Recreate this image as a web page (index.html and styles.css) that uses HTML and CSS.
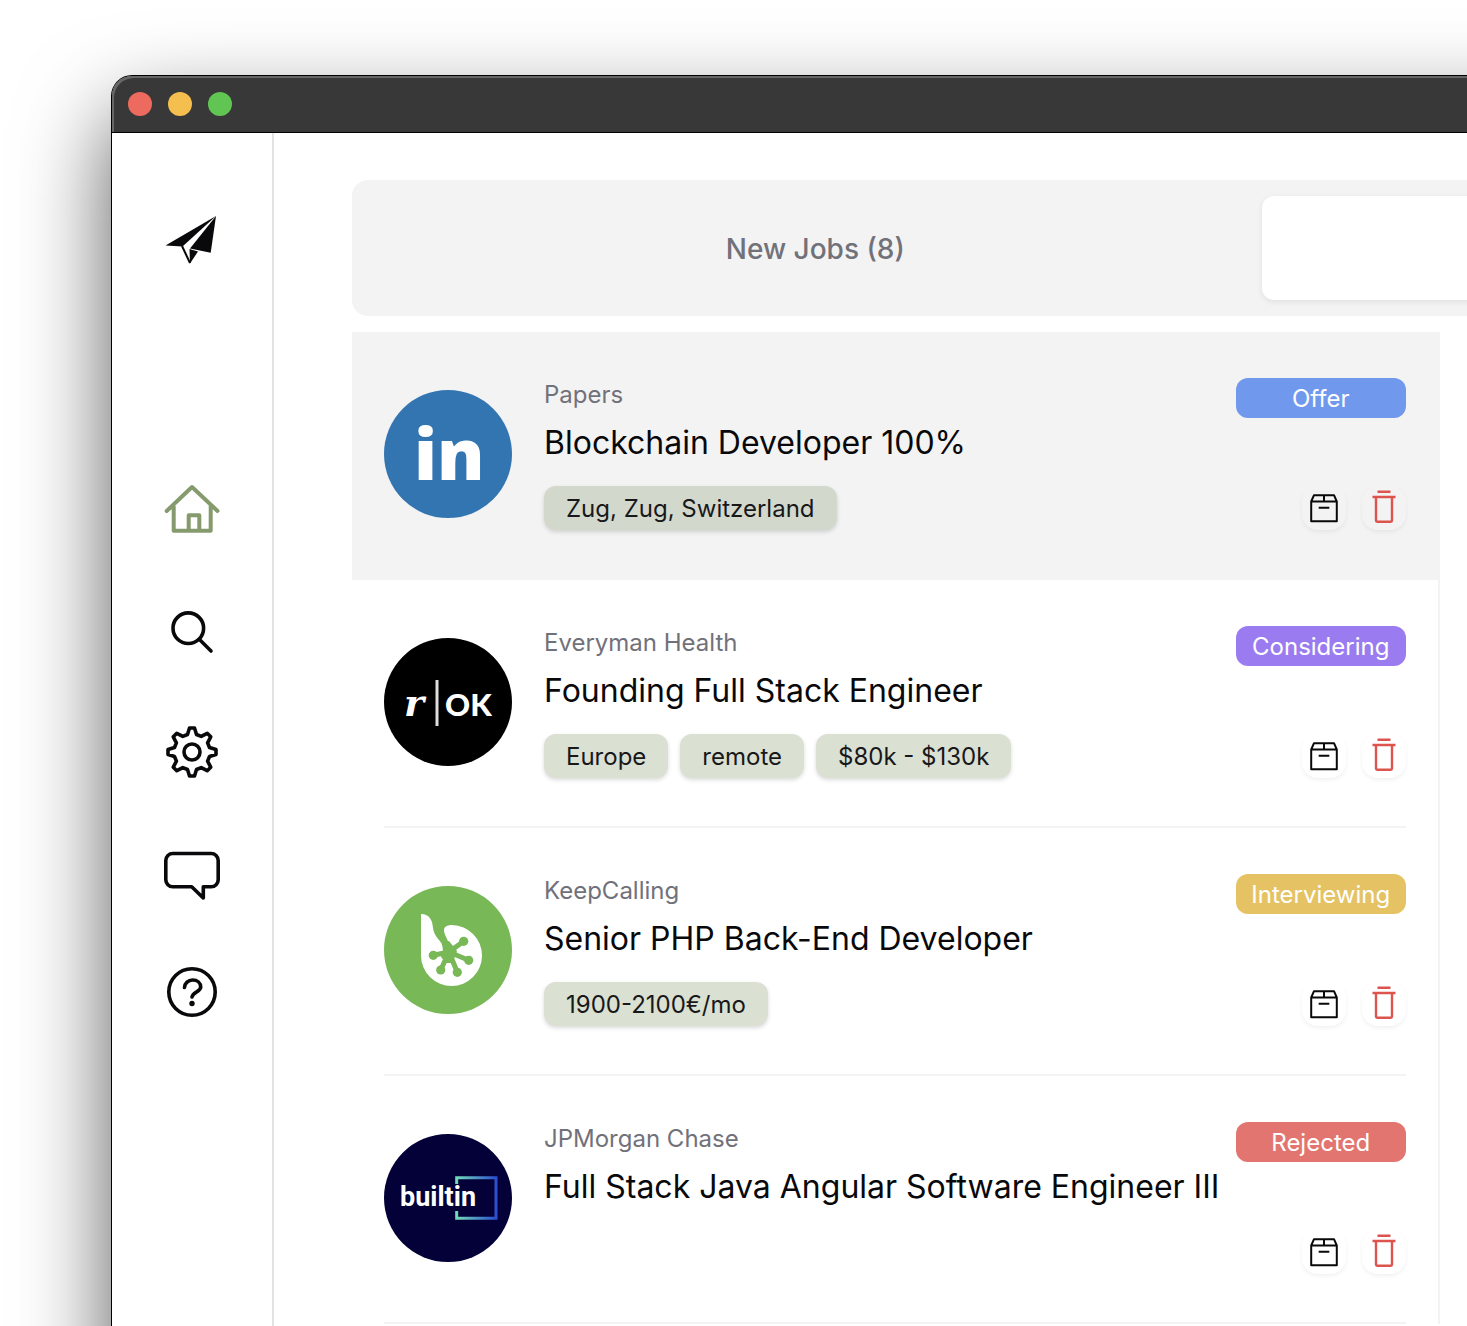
FILE: index.html
```html
<!DOCTYPE html>
<html lang="en">
<head>
<meta charset="utf-8">
<title>Jobs</title>
<link rel="stylesheet" href="styles.css">
</head>
<body>
<svg class="sprite" aria-hidden="true">
  <symbol id="archive" viewBox="0 0 44 44"><path d="M9.200 15.500L12 9.200H32L34.800 15.500V35.200H9.200ZM9.200 15.500H34.800M22 9.200V15.500M16.700 21.700H27.300"/></symbol>
  <symbol id="trash" viewBox="0 0 44 44"><path d="M15.500 5.700H28.500M10.500 11H33.500M14 11V34Q14 35.700 15.700 35.700H28.300Q30 35.700 30 34V11"/></symbol>
</svg>
<div class="window">
  <header class="titlebar">
    <span class="light light-close"></span>
    <span class="light light-minimize"></span>
    <span class="light light-zoom"></span>
  </header>
  <div class="app">
    <aside class="sidebar">
      <a class="brand" href="#" aria-label="Start">
        <svg viewBox="0 0 56 56"><path d="M1.500 33.500L52 4L18.500 34.500Z"/><path d="M52 4L46.700 40.700L26 36.500Z"/><path d="M25.500 37L34 39.500L26 51.500Z"/><path class="fold" d="M18 34L26 51"/></svg>
      </a>
      <nav class="nav">
        <a class="nav-link active" href="#" aria-label="Home"><svg viewBox="0 0 56 56"><path d="M2.700 27L28 3L53.500 27M9.700 22V46.700H46.700V22M24.700 46V31.300H35.300V46"/></svg></a>
        <a class="nav-link" href="#" aria-label="Search"><svg viewBox="0 0 56 56"><circle cx="24.300" cy="24.200" r="15.300"/><path d="M35.500 35.500L47 47"/></svg></a>
        <a class="nav-link" href="#" aria-label="Settings"><svg viewBox="0 0 56 56"><circle cx="28" cy="28" r="8"/><path transform="translate(28 28)" d="M-2.500 -24H2.500L4.500 -17.500L9.200 -15.600L15.200 -18.700L18.700 -15.200L15.600 -9.200L17.500 -4.500L24 -2.500V2.500L17.500 4.500L15.600 9.200L18.700 15.200L15.200 18.700L9.200 15.600L4.500 17.500L2.500 24H-2.500L-4.500 17.500L-9.200 15.600L-15.200 18.700L-18.700 15.200L-15.600 9.200L-17.500 4.500L-24 2.500V-2.500L-17.500 -4.500L-15.600 -9.200L-18.700 -15.200L-15.200 -18.700L-9.200 -15.600L-4.500 -17.500Z"/></svg></a>
        <a class="nav-link" href="#" aria-label="Feedback"><svg viewBox="0 0 56 56"><path d="M9 9.500H47A7 7 0 0 1 54.200 16.500V35.500A7 7 0 0 1 47 42.700H39.300V54L27.700 42.700H9A7 7 0 0 1 1.800 35.500V16.500A7 7 0 0 1 9 9.500Z"/></svg></a>
        <a class="nav-link" href="#" aria-label="Help"><svg viewBox="0 0 56 56"><circle cx="28" cy="28" r="23.200"/><path d="M20.500 23.500A8 8 0 0 1 28.500 16C33.500 16 36.700 19 36.700 23C36.700 28 29 27.500 28 33"/><circle class="dot" cx="28" cy="39.500" r="2.700"/></svg></a>
      </nav>
    </aside>
    <main class="main">
      <div class="tabs" role="tablist">
        <button class="tab" role="tab" type="button">New Jobs (8)</button>
        <button class="tab selected" role="tab" type="button" aria-label="Applied"></button>
      </div>
      <div class="board">
      <ul class="jobs">
        <li class="job selected">
          <div class="job-inner">
            <svg class="avatar" viewBox="0 0 128 128" role="img" aria-label="LinkedIn"><circle cx="64" cy="64" r="64" fill="#3375b1"/><text class="logo-in" x="30" y="90">in</text></svg>
            <div class="details">
              <p class="company">Papers</p>
              <h2 class="title">Blockchain Developer 100%</h2>
              <div class="chips"><span class="chip">Zug, Zug, Switzerland</span></div>
            </div>
            <div class="side">
              <span class="status offer">Offer</span>
              <div class="actions">
                <button class="action" type="button" aria-label="Archive"><svg><use href="#archive"/></svg></button>
                <button class="action danger" type="button" aria-label="Delete"><svg><use href="#trash"/></svg></button>
              </div>
            </div>
          </div>
        </li>
        <li class="job">
          <div class="job-inner">
            <svg class="avatar" viewBox="0 0 128 128" role="img" aria-label="RemoteOK"><circle cx="64" cy="64" r="64" fill="#000"/><text class="logo-r" x="20" y="78">r</text><path d="M53 42V88" stroke="#ddd" stroke-width="3"/><text class="logo-ok" x="61" y="78">OK</text></svg>
            <div class="details">
              <p class="company">Everyman Health</p>
              <h2 class="title">Founding Full Stack Engineer</h2>
              <div class="chips"><span class="chip">Europe</span><span class="chip">remote</span><span class="chip">$80k - $130k</span></div>
            </div>
            <div class="side">
              <span class="status considering">Considering</span>
              <div class="actions">
                <button class="action" type="button" aria-label="Archive"><svg><use href="#archive"/></svg></button>
                <button class="action danger" type="button" aria-label="Delete"><svg><use href="#trash"/></svg></button>
              </div>
            </div>
          </div>
        </li>
        <li class="job">
          <div class="job-inner">
            <svg class="avatar" viewBox="0 0 128 128" role="img" aria-label="BestJobs"><circle cx="64" cy="64" r="64" fill="#78b857"/><path fill="#fff" d="M37 28C46 28 48.500 35 49 42C50 51 57 54 60 62L66 60C64 54 60.500 49 60 45C59.500 41 63 39 68 39A30.500 30.500 0 1 1 37 70Z"/><g fill="#78b857" stroke="#78b857" stroke-width="5"><path d="M65 66L79.700 55.300M65 66L84.700 74.300M65 66L73.300 86.300M65 66L56.700 84M65 66L49.300 69.300M65 66L60 57"/><path stroke="none" d="M58 57L65 55L73 65L71 71L67 77L62 77L57 71L59 65Z"/></g><g fill="#78b857"><circle cx="79.700" cy="55.300" r="4.600"/><circle cx="84.700" cy="74.300" r="4.600"/><circle cx="73.300" cy="86.300" r="4.600"/><circle cx="56.700" cy="84" r="4.600"/><circle cx="49.300" cy="69.300" r="4.600"/></g></svg>
            <div class="details">
              <p class="company">KeepCalling</p>
              <h2 class="title">Senior PHP Back-End Developer</h2>
              <div class="chips"><span class="chip">1900-2100€/mo</span></div>
            </div>
            <div class="side">
              <span class="status interviewing">Interviewing</span>
              <div class="actions">
                <button class="action" type="button" aria-label="Archive"><svg><use href="#archive"/></svg></button>
                <button class="action danger" type="button" aria-label="Delete"><svg><use href="#trash"/></svg></button>
              </div>
            </div>
          </div>
        </li>
        <li class="job">
          <div class="job-inner">
            <svg class="avatar" viewBox="0 0 128 128" role="img" aria-label="Built In"><defs><linearGradient id="frame" gradientUnits="userSpaceOnUse" x1="72" y1="0" x2="112" y2="0"><stop offset="0" stop-color="#74dcb8"/><stop offset="1" stop-color="#2b4fd0"/></linearGradient></defs><circle cx="64" cy="64" r="64" fill="#040038"/><path d="M72.700 50V43.700H112V84.300H72.700V77" fill="none" stroke="url(#frame)" stroke-width="3"/><text class="logo-builtin" x="16" y="72">builtin</text></svg>
            <div class="details">
              <p class="company">JPMorgan Chase</p>
              <h2 class="title">Full Stack Java Angular Software Engineer III</h2>
              <div class="chips"></div>
            </div>
            <div class="side">
              <span class="status rejected">Rejected</span>
              <div class="actions">
                <button class="action" type="button" aria-label="Archive"><svg><use href="#archive"/></svg></button>
                <button class="action danger" type="button" aria-label="Delete"><svg><use href="#trash"/></svg></button>
              </div>
            </div>
          </div>
        </li>
      </ul>
      </div>
    </main>
  </div>
</div>
</body>
</html>
```
FILE: styles.css
```css
* {
  box-sizing: border-box;
}

body {
  height: 100vh;
  margin: 0;
  padding: 76px 0 0 112px;
  overflow: hidden;
  background: #fff;
  color: #09090b;
  font-family: Inter, "Liberation Sans", sans-serif;
}

h2, p, ul {
  margin: 0;
  padding: 0;
}

.sprite {
  display: none;
}

/* The window runs past the right and bottom edges of the screen. */
.window {
  width: 158%;
  min-height: 120vh;
  border-radius: 20px;
  background: #fff;
  box-shadow: 0 0 0 1px #000, 0 40px 90px rgba(0, 0, 0, 0.66);
}

.titlebar {
  display: flex;
  align-items: center;
  gap: 16px;
  height: 57px;
  padding: 0 16px;
  border-bottom: 1px solid #000;
  border-radius: 20px 20px 0 0;
  background: #383838;
  box-shadow: inset 2px 2px 0 #666;
}

.light {
  width: 24px;
  height: 24px;
  border-radius: 50%;
}

.light-close { background: #ed6a5e; }
.light-minimize { background: #f5bf4f; }
.light-zoom { background: #61c554; }

.app {
  display: flex;
  min-height: 120vh;
}

.sidebar {
  display: flex;
  flex-direction: column;
  align-items: center;
  flex: none;
  width: 162px;
  padding-top: 79px;
  border-right: 2px solid #e2e2e2;
}

.brand svg,
.nav-link svg {
  display: block;
  width: 56px;
  height: 56px;
}

.brand {
  margin-bottom: 216px;
  color: #09090b;
}

.brand svg {
  fill: currentColor;
}

.fold {
  stroke: currentColor;
  stroke-width: 2;
}

.nav {
  display: flex;
  flex-direction: column;
  gap: 64px;
}

.nav-link {
  color: #09090b;
}

.nav-link.active {
  color: #869b6d;
}

.nav-link svg {
  fill: none;
  stroke: currentColor;
  stroke-width: 3.6;
  stroke-linecap: round;
  stroke-linejoin: round;
}

.nav-link.active svg {
  stroke-width: 4;
}

.nav-link .dot {
  fill: currentColor;
  stroke: none;
}

.main {
  flex: 1;
  padding: 47px 80px 0 78px;
}

.tabs {
  display: grid;
  grid-template-columns: 1fr 1fr;
  height: 136px;
  margin-bottom: 16px;
  padding: 16px;
  border-radius: 16px;
  background: #f3f3f3;
}

.tab {
  padding: 2px 0 0;
  border: 0;
  border-radius: 12px;
  background: none;
  color: #71717a;
  font: 500 28px/40px Inter, "Liberation Sans", sans-serif;
}

.tab.selected {
  background: #fff;
  box-shadow: 0 2px 6px rgba(0, 0, 0, 0.08);
}

.board {
  display: grid;
  grid-template-columns: 3fr 2fr;
  gap: 8px;
}

.jobs {
  list-style: none;
  background: linear-gradient(#f3f3f3, #f3f3f3) right / 2px 100% no-repeat;
}

.job {
  padding: 0 34px 0 32px;
}

.job.selected {
  background: #f3f3f3;
}

.job-inner {
  display: flex;
  align-items: center;
  gap: 32px;
  height: 248px;
  padding: 46px 0 48px;
  border-bottom: 2px solid #f3f3f3;
}

.avatar {
  flex: none;
  width: 128px;
  height: 128px;
}

.avatar text {
  fill: #fff;
}

.logo-in {
  font: 800 71px "Open Sans", sans-serif;
}

.logo-r {
  font: italic 700 38px "DejaVu Serif", serif;
}

.logo-ok {
  font: 900 31px Lato, sans-serif;
}

.logo-builtin {
  font: 700 27px Roboto, sans-serif;
}

.details {
  flex: 1;
  align-self: stretch;
  min-width: 0;
  white-space: nowrap;
}

.company {
  color: #71717a;
  font-size: 24px;
  line-height: 34px;
}

.title {
  margin-top: 12px;
  font-size: 32px;
  font-weight: 400;
  line-height: 38px;
}

.chips {
  display: flex;
  gap: 12px;
  margin-top: 24px;
}

.chip {
  padding: 2px 22px 0;
  border-radius: 12px;
  background: #dae0d2;
  box-shadow: 0 2px 4px rgba(0, 0, 0, 0.15);
  color: #18181b;
  font-size: 24px;
  line-height: 42px;
}

.job.selected .chip {
  background: #d3d8cd;
}

.side {
  display: flex;
  flex-direction: column;
  justify-content: space-between;
  align-items: flex-end;
  align-self: stretch;
  flex: none;
  width: 170px;
  margin-left: -32px;
}

.status {
  width: 100%;
  padding-top: 2px;
  border-radius: 12px;
  color: #fff;
  font-size: 24px;
  line-height: 38px;
  text-align: center;
}

.offer { background: #7099ee; }
.considering { background: #9b7cf0; }
.interviewing { background: #e5c365; }
.rejected { background: #e2756f; }

.actions {
  display: flex;
  gap: 16px;
}

.action {
  width: 44px;
  height: 44px;
  padding: 0;
  border: 0;
  border-radius: 16px;
  background: transparent;
  box-shadow: 0 2px 4px rgba(0, 0, 0, 0.06);
  color: #09090b;
}

.action.danger {
  color: #dc544d;
}

.action svg {
  display: block;
  width: 44px;
  height: 44px;
  fill: none;
  stroke: currentColor;
  stroke-width: 2;
  stroke-linejoin: round;
}

.action.danger svg {
  stroke-width: 2.4;
}
```
